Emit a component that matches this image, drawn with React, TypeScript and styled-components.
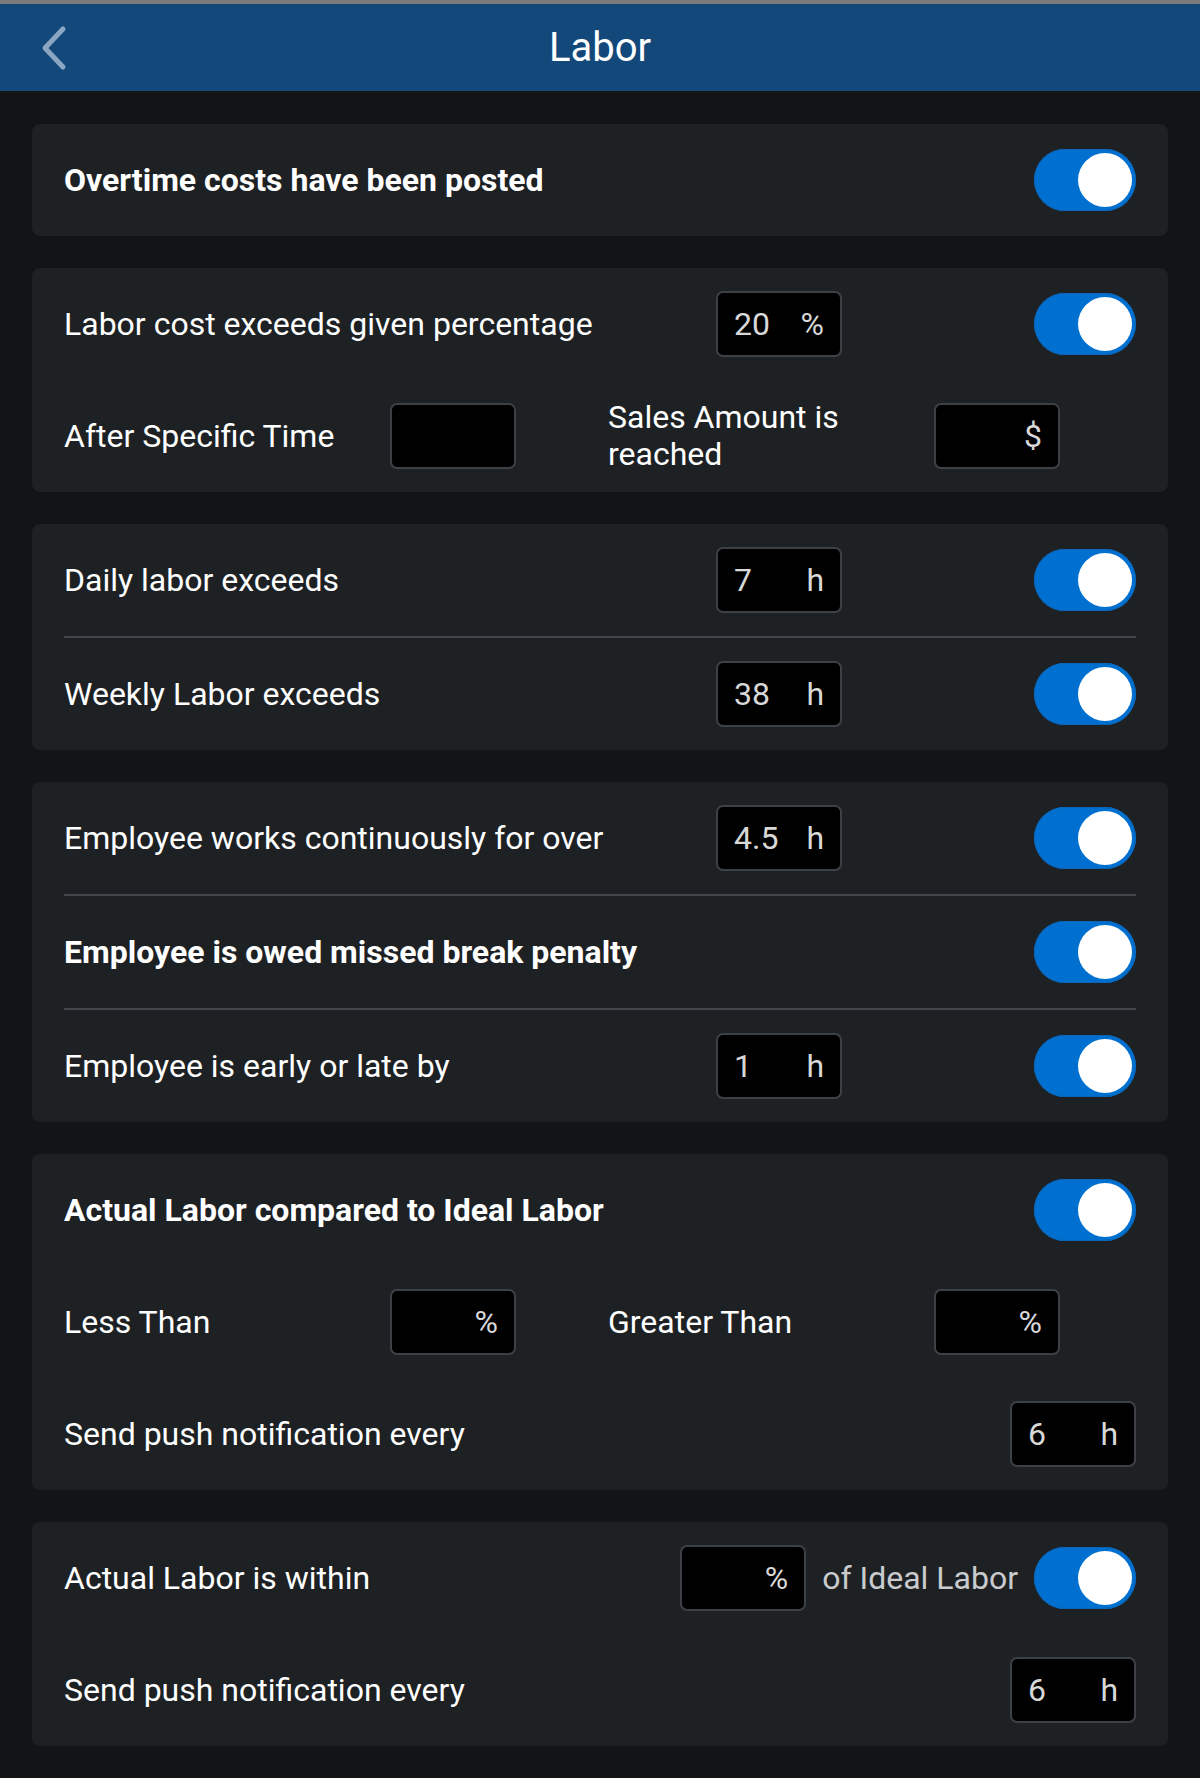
import React from "react";
import styled, { createGlobalStyle } from "styled-components";

const GlobalStyle = createGlobalStyle`
  html, body {
    margin: 0;
    padding: 0;
    background: #121416;
  }
  body {
    font-family: Roboto, "Noto Sans", "Liberation Sans", sans-serif;
    color: #ffffff;
  }
  * { box-sizing: border-box; }
`;

const Screen = styled.div`
  width: 1200px;
  min-height: 1778px;
  background: #121416;
  border-top: 4px solid #7b7b7b;
`;

const Header = styled.header`
  position: relative;
  height: 87px;
  background: #12487a;
  display: flex;
  align-items: center;
  justify-content: center;
`;

const BackButton = styled.button`
  position: absolute;
  left: 34px;
  top: 50%;
  transform: translateY(-50%);
  width: 40px;
  height: 56px;
  padding: 0;
  border: none;
  background: transparent;
  display: flex;
  align-items: center;
  justify-content: center;
  cursor: pointer;
`;

const Title = styled.h1`
  margin: 0;
  font-size: 40px;
  font-weight: 400;
  color: #ffffff;
`;

const Content = styled.main`
  display: flex;
  flex-direction: column;
  gap: 32px;
  padding: 33px 32px 32px;
`;

const Card = styled.section`
  background: #1e2124;
  border-radius: 8px;
  padding: 0 32px;
  display: flex;
  flex-direction: column;
`;

const Divider = styled.hr`
  margin: 0;
  border: none;
  height: 2px;
  background: #43464a;
`;

const Row = styled.div`
  min-height: 112px;
  display: flex;
  align-items: center;
`;

const Label = styled.span<{ $bold?: boolean }>`
  flex: 1 1 auto;
  font-size: 32px;
  line-height: 36px;
  font-weight: ${(p) => (p.$bold ? 700 : 400)};
  color: #ffffff;
`;

const Field = styled.div<{ $trail?: number }>`
  flex: 0 0 auto;
  width: 126px;
  height: 66px;
  background: #000000;
  border: 2px solid #3d4044;
  border-radius: 7px;
  padding: 0 16px;
  display: flex;
  align-items: center;
  margin-right: ${(p) => p.$trail ?? 0}px;
  font-size: 32px;
  color: #d8d8d8;
`;

const FieldValue = styled.span``;

const FieldUnit = styled.span`
  margin-left: auto;
`;

const Suffix = styled.span`
  font-size: 32px;
  color: #c9cbce;
  margin: 0 16px;
  white-space: nowrap;
`;

const PairRow = styled.div`
  min-height: 112px;
  display: flex;
  align-items: center;
  gap: 92px;
`;

const Pair = styled.div`
  display: grid;
  grid-template-columns: 326px 126px;
  align-items: center;
`;

const PairLabel = styled.span`
  font-size: 32px;
  line-height: 37px;
  color: #ffffff;
  padding-right: 16px;
`;

const Track = styled.div<{ $on?: boolean }>`
  flex: 0 0 auto;
  width: 102px;
  height: 62px;
  border-radius: 31px;
  background: ${(p) => (p.$on ? "#0070d0" : "#555")};
  box-shadow: inset 0 0 0 1px #0a66bb;
  position: relative;
`;

const Knob = styled.div<{ $on?: boolean }>`
  position: absolute;
  top: 4px;
  left: ${(p) => (p.$on ? "44px" : "4px")};
  width: 54px;
  height: 54px;
  border-radius: 50%;
  background: #ffffff;
`;

const Toggle = ({ on = true }: { on?: boolean }) => (
  <Track $on={on} role="switch" aria-checked={on}>
    <Knob $on={on} />
  </Track>
);

const Input = ({ value = "", unit, trail }: { value?: string; unit: string; trail?: number }) => (
  <Field $trail={trail}>
    <FieldValue>{value}</FieldValue>
    <FieldUnit>{unit}</FieldUnit>
  </Field>
);

const Chevron = () => (
  <svg width="30" height="46" viewBox="0 0 30 46" fill="none">
    <polyline
      points="24,4 6,23 24,42"
      stroke="#8aa6c2"
      strokeWidth="5"
      strokeLinecap="round"
      strokeLinejoin="round"
    />
  </svg>
);

export default function App() {
  return (
    <>
      <GlobalStyle />
      <Screen>
        <Header>
          <BackButton aria-label="Back">
            <Chevron />
          </BackButton>
          <Title>Labor</Title>
        </Header>
        <Content>
          <Card>
            <Row>
              <Label $bold>Overtime costs have been posted</Label>
              <Toggle />
            </Row>
          </Card>

          <Card>
            <Row>
              <Label>Labor cost exceeds given percentage</Label>
              <Input value="20" unit="%" trail={192} />
              <Toggle />
            </Row>
            <PairRow>
              <Pair>
                <PairLabel>After Specific Time</PairLabel>
                <Input unit="" />
              </Pair>
              <Pair>
                <PairLabel>Sales Amount is reached</PairLabel>
                <Input unit="$" />
              </Pair>
            </PairRow>
          </Card>

          <Card>
            <Row>
              <Label>Daily labor exceeds</Label>
              <Input value="7" unit="h" trail={192} />
              <Toggle />
            </Row>
            <Divider />
            <Row>
              <Label>Weekly Labor exceeds</Label>
              <Input value="38" unit="h" trail={192} />
              <Toggle />
            </Row>
          </Card>

          <Card>
            <Row>
              <Label>Employee works continuously for over</Label>
              <Input value="4.5" unit="h" trail={192} />
              <Toggle />
            </Row>
            <Divider />
            <Row>
              <Label $bold>Employee is owed missed break penalty</Label>
              <Toggle />
            </Row>
            <Divider />
            <Row>
              <Label>Employee is early or late by</Label>
              <Input value="1" unit="h" trail={192} />
              <Toggle />
            </Row>
          </Card>

          <Card>
            <Row>
              <Label $bold>Actual Labor compared to Ideal Labor</Label>
              <Toggle />
            </Row>
            <PairRow>
              <Pair>
                <PairLabel>Less Than</PairLabel>
                <Input unit="%" />
              </Pair>
              <Pair>
                <PairLabel>Greater Than</PairLabel>
                <Input unit="%" />
              </Pair>
            </PairRow>
            <Row>
              <Label>Send push notification every</Label>
              <Input value="6" unit="h" />
            </Row>
          </Card>

          <Card>
            <Row>
              <Label>Actual Labor is within</Label>
              <Input unit="%" />
              <Suffix>of Ideal Labor</Suffix>
              <Toggle />
            </Row>
            <Row>
              <Label>Send push notification every</Label>
              <Input value="6" unit="h" />
            </Row>
          </Card>
        </Content>
      </Screen>
    </>
  );
}
